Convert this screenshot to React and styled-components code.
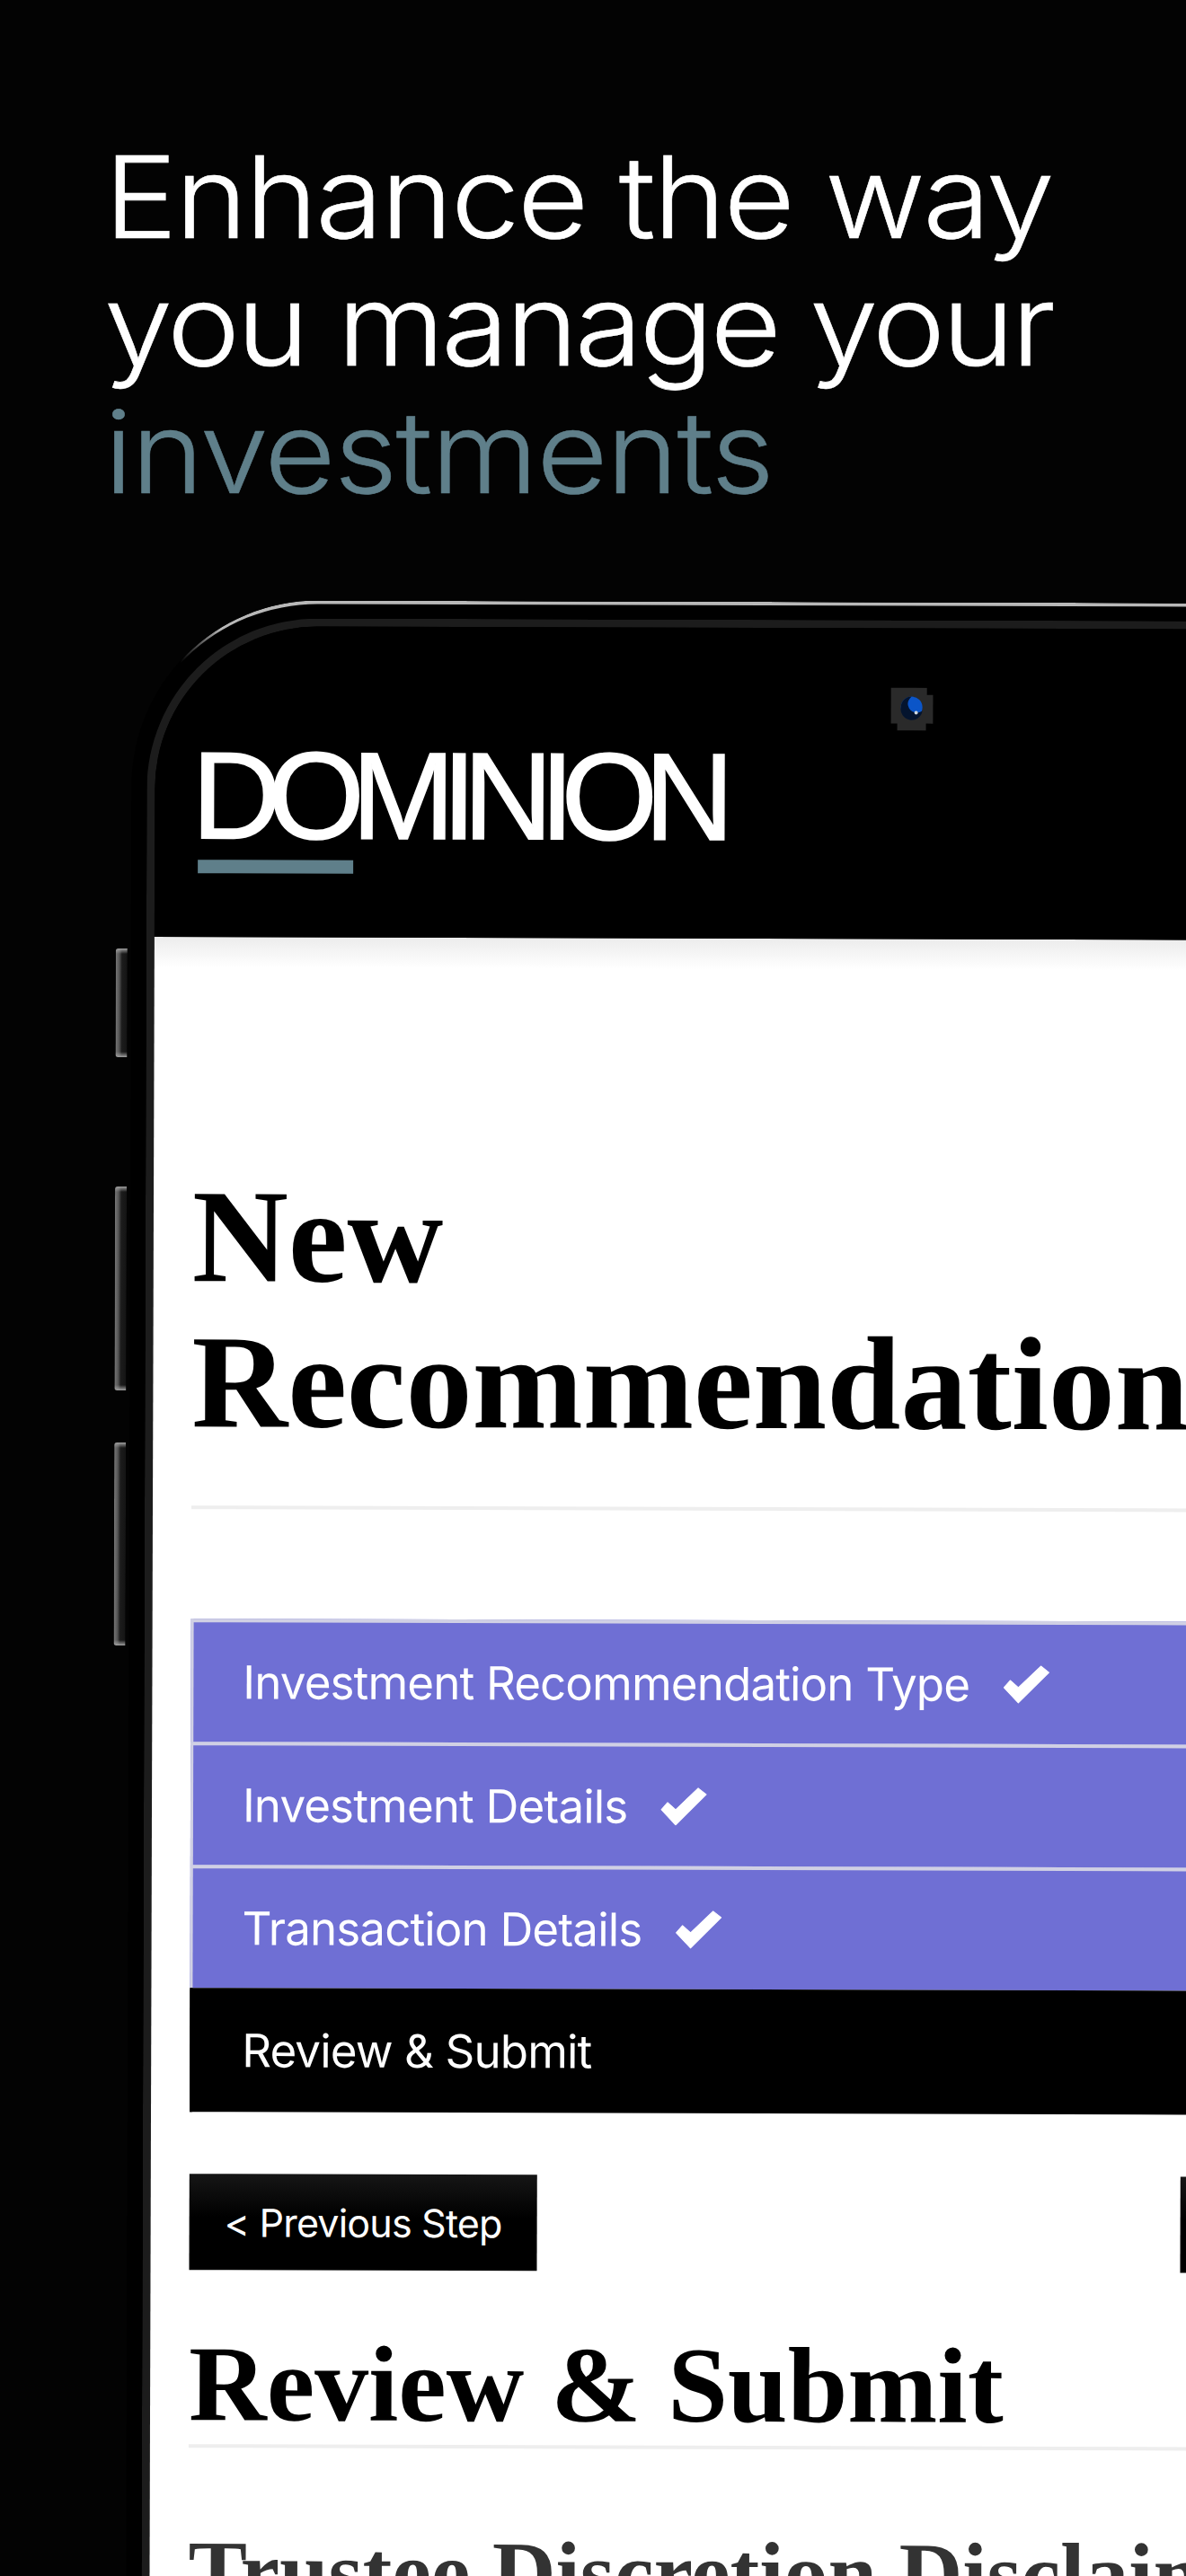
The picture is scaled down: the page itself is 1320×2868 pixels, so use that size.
import React from "react";
import styled, { createGlobalStyle } from "styled-components";

const Global = createGlobalStyle`
  html, body {
    margin: 0;
    padding: 0;
    background: #030303;
  }
`;

const Page = styled.div`
  width: 1320px;
  height: 2868px;
  overflow: hidden;
  background: #030303;
  padding: 148px 0 0 116px;
  box-sizing: border-box;
`;

const Headline = styled.h1`
  margin: 0 0 94px;
  font-family: Inter, "Liberation Sans", sans-serif;
  font-weight: 300;
  font-size: 126px;
  line-height: 142px;
  white-space: nowrap;
  transform: scaleX(1.085);
  transform-origin: 0 0;
`;

const HeadLine = styled.span`
  display: block;
  color: ${(p) => p.$color};
  letter-spacing: ${(p) => p.$spacing}px;
  -webkit-text-stroke: 0.6px ${(p) => p.$color};
`;

const Device = styled.div`
  position: relative;
  margin-left: 31px;
  width: 1600px;
  box-sizing: border-box;
  padding: 20px 0 0 17px;
  background: #000;
  border-top-left-radius: 207px;
  transform: rotate(0.17deg);
  transform-origin: 0 0;
`;

const EdgeLight = styled.div`
  position: absolute;
  left: 0;
  top: 0;
  width: 100%;
  height: 260px;
  box-sizing: border-box;
  border-top: 4px solid #b8b8b8;
  border-top-left-radius: 207px;
  mask-image: linear-gradient(90deg, transparent 54px, #000 100px);
`;

const SideButton = styled.div`
  position: absolute;
  left: -17px;
  top: ${(p) => p.$top}px;
  width: 13px;
  height: ${(p) => p.$height}px;
  border-radius: 3px 0 0 3px;
  background:
    linear-gradient(#a0a0a0, transparent 6px, transparent calc(100% - 6px), #a0a0a0),
    linear-gradient(90deg, #777 0, #555 4px, #1c1c1c 7px, #141414);
`;

const Bezel = styled.div`
  border: solid #1c1c1c;
  border-width: 9px 0 0 9px;
  border-top-left-radius: 190px;
`;

const Header = styled.header`
  position: relative;
  height: 346px;
  box-sizing: border-box;
  padding: 138px 0 0 41px;
  background: #000;
  border-top-left-radius: 181px;
`;

const Logo = styled.div`
  font-family: "Liberation Sans", Arial, sans-serif;
  font-size: 138px;
  line-height: 100px;
  letter-spacing: -14.5px;
  color: #fff;
  -webkit-text-stroke: 1.5px #fff;
`;

const LogoBar = styled.div`
  width: 173px;
  height: 15px;
  margin: 22px 0 0 7px;
  background: #5f7f8a;
`;

const Camera = styled.svg`
  position: absolute;
  left: 818px;
  top: 66px;
`;

const Screen = styled.main`
  height: 1900px;
  padding-left: 43px;
  background: linear-gradient(#ececec, #fff 34px);
`;

const Title = styled.h2`
  margin: 0;
  padding-top: 252px;
  font-family: "Liberation Serif", "Times New Roman", serif;
  font-weight: 700;
  font-size: 148px;
  line-height: 162px;
  color: #000;
  white-space: nowrap;
`;

const Rule = styled.hr`
  margin: ${(p) => p.$top}px 0 0;
  border: 0;
  height: 4px;
  background: #eeeeee;
`;

const Steps = styled.ol`
  list-style: none;
  margin: 122px 0 0;
  padding: 0;
`;

const Step = styled.li`
  display: flex;
  align-items: center;
  gap: 37px;
  height: ${(p) => (p.$done ? 133 : 138)}px;
  padding-left: 55px;
  font-family: Inter, "Liberation Sans", sans-serif;
  font-size: 51px;
  letter-spacing: -0.83px;
  color: #fff;
  background: ${(p) => (p.$done ? "#6f6fd4" : "#000")};
  border-left: 3px solid ${(p) => (p.$done ? "#d0d0e4" : "#000")};
  border-top: ${(p) => (p.$done ? "4px solid #d0d0e4" : "0")};
`;

const Check = () => (
  <svg width="52" height="43" viewBox="0 0 52 43" aria-hidden="true">
    <path
      fill="#fff"
      stroke="#fff"
      strokeLinejoin="round"
      d="M1 25 8 17 17 25 42 1 51 8 17 42z"
    />
  </svg>
);

const StepNav = styled.div`
  display: flex;
  justify-content: space-between;
  margin-top: 69px;
  width: 1490px;
`;

const NavButton = styled.button`
  width: 387px;
  height: 107px;
  padding: 0;
  border: 0;
  background: linear-gradient(#161616, #000 45%);
  color: #fff;
  font-family: Inter, "Liberation Sans", sans-serif;
  font-size: 43px;
  letter-spacing: -0.8px;
`;

const Section = styled.h3`
  margin: 0;
  font-family: "Liberation Serif", "Times New Roman", serif;
  font-weight: 700;
  font-size: ${(p) => p.$size}px;
  line-height: ${(p) => p.$line}px;
  padding-top: ${(p) => p.$pad}px;
  color: ${(p) => p.$color};
  white-space: nowrap;
`;

export default function App() {
  return (
    <Page>
      <Global />
      <Headline>
        <HeadLine $color="#fff" $spacing={-2.2}>Enhance the way</HeadLine>
        <HeadLine $color="#fff" $spacing={-3.2}>you manage your</HeadLine>
        <HeadLine $color="#5f7f8a" $spacing={-1.6}>investments</HeadLine>
      </Headline>
      <Device>
        <EdgeLight />
        <SideButton $top={388} $height={121} />
        <SideButton $top={653} $height={227} />
        <SideButton $top={938} $height={226} />
        <Bezel>
          <Header>
            <Logo>DOMINION</Logo>
            <LogoBar />
            <Camera width="48" height="48" viewBox="0 0 48 48">
              <path fill="#2a2a2a" d="M1 0h40v8h7v32h-8v8H8v-8H1z" />
              <circle cx="24" cy="22" r="12" fill="#0b55c8" />
              <path fill="#04142e" d="M12 22a12 12 0 0 0 24 4c-6 4-14 2-16-6-1-4 1-7 4-10a12 12 0 0 0-12 12z" />
              <circle cx="29" cy="28" r="2" fill="#cfd8e0" />
            </Camera>
          </Header>
          <Screen>
            <Title>
              New
              <br />
              Recommendation
            </Title>
            <Rule $top={57} />
            <Steps>
              <Step $done>
                Investment Recommendation Type <Check />
              </Step>
              <Step $done>
                Investment Details <Check />
              </Step>
              <Step $done>
                Transaction Details <Check />
              </Step>
              <Step>Review &amp; Submit</Step>
            </Steps>
            <StepNav>
              <NavButton>&lt; Previous Step</NavButton>
              <NavButton aria-label="Next step" />
            </StepNav>
            <Section $size={120} $line={122} $pad={66} $color="#000">
              Review &amp; Submit
            </Section>
            <Rule $top={6} />
            <Section $size={98} $line={110} $pad={83} $color="#333">
              Trustee Discretion Disclaimer
            </Section>
          </Screen>
        </Bezel>
      </Device>
    </Page>
  );
}
